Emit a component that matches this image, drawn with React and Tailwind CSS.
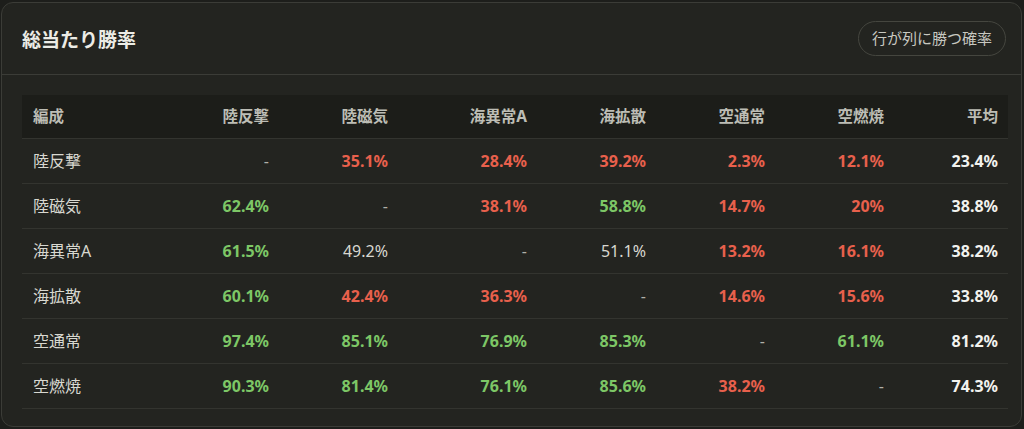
import React from "react";

const cols = ["陸反撃", "陸磁気", "海異常A", "海拡散", "空通常", "空燃焼"];
const rows = [
  { name: "陸反撃", vals: [null, 35.1, 28.4, 39.2, 2.3, 12.1], avg: "23.4%" },
  { name: "陸磁気", vals: [62.4, null, 38.1, 58.8, 14.7, 20], avg: "38.8%" },
  { name: "海異常A", vals: [61.5, 49.2, null, 51.1, 13.2, 16.1], avg: "38.2%" },
  { name: "海拡散", vals: [60.1, 42.4, 36.3, null, 14.6, 15.6], avg: "33.8%" },
  { name: "空通常", vals: [97.4, 85.1, 76.9, 85.3, null, 61.1], avg: "81.2%" },
  { name: "空燃焼", vals: [90.3, 81.4, 76.1, 85.6, 38.2, null], avg: "74.3%" },
];

const widths = ["w-[140px]", "w-[119px]", "w-[119px]", "w-[139px]", "w-[119px]", "w-[119px]", "w-[119px]", "w-[112px]"];

function Cell({ v }) {
  if (v === null) return <span className="text-[#b0b0a8]">-</span>;
  if (v > 55) return <span className="font-bold text-[#7dc766]">{v}%</span>;
  if (v < 45) return <span className="font-bold text-[#e8604c]">{v}%</span>;
  return <span className="text-[#d8d8d0]">{v}%</span>;
}

export default function App() {
  return (
    <div
      className="w-[1024px] h-[429px] bg-[#1d1e1b] pl-[1px] pt-[2px]"
      style={{ fontFamily: '"Noto Sans", "Noto Sans CJK JP", sans-serif' }}
    >
      <div className="w-[1021px] h-[425px] rounded-[12px] border border-[#3b3c37] bg-[#232420] overflow-hidden">
        <div className="h-[72px] flex items-center justify-between pl-[20px] pr-[15px] border-b border-[#3b3c37]">
          <div className="text-[19px] font-bold text-[#ecece6] pt-[3px]">総当たり勝率</div>
          <div className="h-[35px] px-[13px] rounded-full border border-[#45463f] text-[15px] text-[#c8c8c0] flex items-center">
            行が列に勝つ確率
          </div>
        </div>
        <div className="pt-[20px] pl-[20px]">
          <table className="w-[986px] table-fixed border-collapse text-[16px]">
            <thead>
              <tr className="bg-[#1c1d19] h-[43px] border-b border-[#33342f] text-[15.5px]">
                <th className={`${widths[0]} text-left pl-[11px] font-bold text-[#bdbdb5]`}>編成</th>
                {cols.map((c, i) => (
                  <th key={c} className={`${widths[i + 1]} text-right pr-[12px] font-bold text-[#bdbdb5]`}>{c}</th>
                ))}
                <th className={`${widths[7]} text-right pr-[10px] font-bold text-[#bdbdb5]`}>平均</th>
              </tr>
            </thead>
            <tbody>
              {rows.map((r) => (
                <tr key={r.name} className="h-[45px] border-b border-[#33342f]">
                  <td className="text-left pl-[11px] text-[#d8d8d0]">{r.name}</td>
                  {r.vals.map((v, i) => (
                    <td key={i} className="text-right pr-[12px]">
                      <Cell v={v} />
                    </td>
                  ))}
                  <td className="text-right pr-[10px] font-bold text-[#f2f2ee]">{r.avg}</td>
                </tr>
              ))}
            </tbody>
          </table>
        </div>
      </div>
    </div>
  );
}
